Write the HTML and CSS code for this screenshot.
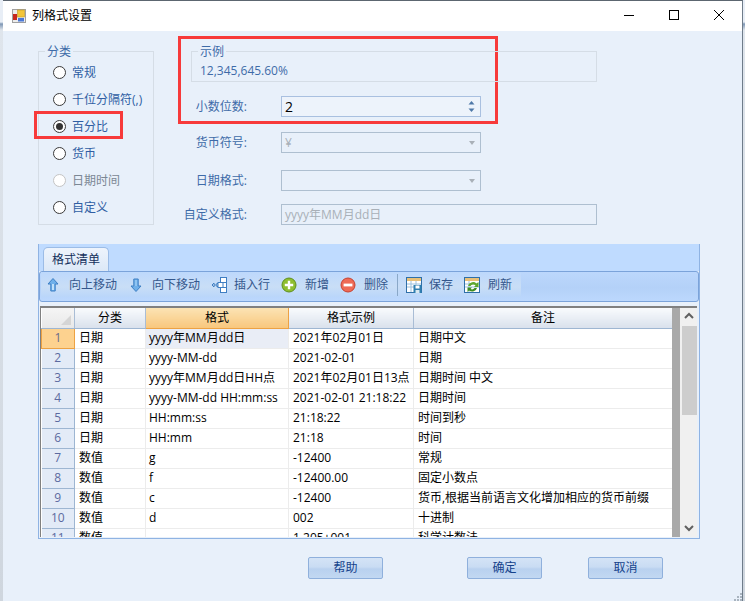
FILE: index.html
```html
<!DOCTYPE html>
<html lang="zh-CN">
<head>
<meta charset="utf-8">
<title>列格式设置</title>
<link rel="stylesheet" href="styles.css">
</head>
<body>
<div class="window">
  <header class="titlebar">
    <svg class="app-icon" width="14" height="14" viewBox="0 0 14 14"><rect x="0.5" y="0.5" width="13" height="13" fill="#ececec" stroke="#a0a0a0"/><rect x="1" y="5" width="4" height="6" fill="#c8281e"/><rect x="5.5" y="1" width="7" height="7" fill="#f3c53a" stroke="#c09a20" stroke-width="0.6"/><rect x="6" y="9" width="6" height="3.5" fill="#4a78d8"/></svg>
    <span class="title">列格式设置</span>
    <div class="caption-buttons">
      <svg width="12" height="12" viewBox="0 0 12 12"><path d="M1 6.5H11" stroke="#000" fill="none"/></svg>
      <svg width="12" height="12" viewBox="0 0 12 12"><rect x="1.5" y="1.5" width="9" height="9" stroke="#000" fill="none"/></svg>
      <svg width="12" height="12" viewBox="0 0 12 12"><path d="M1 1L11 11M11 1L1 11" stroke="#000" fill="none"/></svg>
    </div>
  </header>
  <main class="content">
    <section class="top">
      <div class="group category">
        <span class="legend">分类</span>
        <div class="radio"><span class="dot"></span>常规</div>
        <div class="radio"><span class="dot"></span>千位分隔符(,)</div>
        <div class="radio"><span class="dot on"></span>百分比</div>
        <div class="radio"><span class="dot"></span>货币</div>
        <div class="radio disabled"><span class="dot"></span>日期时间</div>
        <div class="radio"><span class="dot"></span>自定义</div>
        <span class="red-box red-radio"></span>
      </div>
      <div class="form">
        <span class="red-box red-form"></span>
        <div class="group sample">
          <span class="legend">示例</span>
          <span class="sample-value">12,345,645.60%</span>
        </div>
        <div class="field gap14">
          <label>小数位数:</label>
          <div class="input active"><span class="val">2</span>
            <svg class="spin" width="7" height="17" viewBox="0 0 7 17"><path d="M3.5 3L6.5 6.5H0.5Z" fill="#4f78a8"/><path d="M0.5 10.5H6.5L3.5 14Z" fill="#4f78a8"/></svg>
          </div>
        </div>
        <div class="field gap15">
          <label>货币符号:</label>
          <div class="input off"><span class="ph">¥</span><span class="caret"></span></div>
        </div>
        <div class="field gap17">
          <label>日期格式:</label>
          <div class="input off"><span class="ph"></span><span class="caret"></span></div>
        </div>
        <div class="field gap13">
          <label>自定义格式:</label>
          <div class="input off wide"><span class="ph">yyyy年MM月dd日</span></div>
        </div>
      </div>
    </section>

    <section class="panel">
      <div class="tabs"><div class="tab">格式清单</div></div>
      <div class="toolbar">
        <div class="strip">
          <div class="tool">
            <svg width="16" height="16" viewBox="0 0 16 16"><path d="M8 1.5L13 7H10.2V14H5.8V7H3Z" fill="#6fb0ea" stroke="#3d7fc4"/><path d="M7 7H9V13H7Z" fill="#bfe0fa"/></svg>向上移动
          </div>
          <div class="tool">
            <svg width="16" height="16" viewBox="0 0 16 16"><path d="M8 14.5L3 9H5.8V2H10.2V9H13Z" fill="#6fb0ea" stroke="#3d7fc4"/><path d="M7 3H9V9H7Z" fill="#8ec4f2"/></svg>向下移动
          </div>
          <div class="tool tight">
            <svg width="16" height="16" viewBox="0 0 16 16"><path d="M1 8L3 6V10ZM8 8L6 6V10ZM3 8H6" fill="#fff" stroke="#3f7ec2"/><rect x="9.5" y="0.5" width="6" height="15" fill="#fff" stroke="#3f7ec2"/><path d="M9.5 5.5H15.5M9.5 10.5H15.5" stroke="#3f7ec2"/><rect x="7" y="5.5" width="5" height="5" fill="#fff" stroke="#3f7ec2"/></svg>插入行
          </div>
          <div class="tool">
            <svg width="16" height="16" viewBox="0 0 16 16"><circle cx="8" cy="8" r="7" fill="#8fbe30" stroke="#5f8f1d"/><path d="M6.8 3.8H9.2V6.8H12.2V9.2H9.2V12.2H6.8V9.2H3.8V6.8H6.8Z" fill="#fff"/></svg>新增
          </div>
          <div class="tool">
            <svg width="16" height="16" viewBox="0 0 16 16"><circle cx="8" cy="8" r="7" fill="#ee6a55" stroke="#c8402e"/><rect x="3.6" y="6.6" width="8.8" height="2.8" fill="#fff"/></svg>删除
          </div>
          <span class="sep"></span>
          <div class="tool tight">
            <svg width="16" height="16" viewBox="0 0 16 16"><rect x="0.5" y="0.5" width="15" height="15" fill="#fff" stroke="#2f6fa8"/><rect x="1" y="1" width="14" height="3" fill="#e8c078"/><path d="M1 7H15M1 10H15M5 4V15M10 4V15" stroke="#9cc0dc"/><rect x="7.5" y="8" width="8" height="8" fill="#2f7fb0"/><rect x="9.5" y="8.5" width="4" height="3" fill="#fff"/><rect x="9.5" y="13" width="4" height="3" fill="#d8e8f0"/></svg>保存
          </div>
          <div class="tool">
            <svg width="16" height="16" viewBox="0 0 16 16"><rect x="0.5" y="0.5" width="15" height="15" fill="#fff" stroke="#2f6fa8"/><rect x="1" y="1" width="14" height="3" fill="#e8c078"/><path d="M1 7H15M1 10H15M5 4V15" stroke="#9cc0dc"/><path d="M4 9A5 4.5 0 0 1 12.5 6.5L14.5 5V10H10L11.5 8.5A3 2.6 0 0 0 6.5 9Z" fill="#5ea82e"/><path d="M13 11A5 4.5 0 0 1 5 13.5L3.5 15V10.5H8L6.5 12A3 2.6 0 0 0 10.5 11Z" fill="#3e8c22"/></svg>刷新
          </div>
        </div>
      </div>
      <div class="grid-wrap">
        <div class="grid-body">
          <table class="grid">
            <colgroup><col class="c0"><col class="c1"><col class="c2"><col class="c3"><col class="c4"></colgroup>
            <thead>
              <tr><th class="corner"><span class="tri"></span></th><th>分类</th><th class="sel">格式</th><th>格式示例</th><th>备注</th></tr>
            </thead>
            <tbody>
              <tr><td class="rh cur">1</td><td>日期</td><td class="selcell">yyyy年MM月dd日</td><td>2021年02月01日</td><td>日期中文</td></tr>
              <tr><td class="rh">2</td><td>日期</td><td>yyyy-MM-dd</td><td>2021-02-01</td><td>日期</td></tr>
              <tr><td class="rh">3</td><td>日期</td><td>yyyy年MM月dd日HH点</td><td>2021年02月01日13点</td><td>日期时间 中文</td></tr>
              <tr><td class="rh">4</td><td>日期</td><td>yyyy-MM-dd HH:mm:ss</td><td>2021-02-01 21:18:22</td><td>日期时间</td></tr>
              <tr><td class="rh">5</td><td>日期</td><td>HH:mm:ss</td><td>21:18:22</td><td>时间到秒</td></tr>
              <tr><td class="rh">6</td><td>日期</td><td>HH:mm</td><td>21:18</td><td>时间</td></tr>
              <tr><td class="rh">7</td><td>数值</td><td>g</td><td>-12400</td><td>常规</td></tr>
              <tr><td class="rh">8</td><td>数值</td><td>f</td><td>-12400.00</td><td>固定小数点</td></tr>
              <tr><td class="rh">9</td><td>数值</td><td>c</td><td>-12400</td><td>货币,根据当前语言文化增加相应的货币前缀</td></tr>
              <tr><td class="rh">10</td><td>数值</td><td>d</td><td>002</td><td>十进制</td></tr>
              <tr><td class="rh">11</td><td>数值</td><td></td><td>1.205+001</td><td>科学计数法</td></tr>
            </tbody>
          </table>
        </div>
        <div class="gutter"></div>
        <div class="scrollbar">
          <svg width="16" height="18" viewBox="0 0 16 18"><path d="M4 10L8 6L12 10" fill="none" stroke="#606060" stroke-width="2"/></svg>
          <div class="thumb"></div>
          <svg class="down" width="16" height="18" viewBox="0 0 16 18"><path d="M4 7L8 11L12 7" fill="none" stroke="#606060" stroke-width="2"/></svg>
        </div>
      </div>
    </section>

    <footer class="footer">
      <button class="btn help">帮助</button>
      <button class="btn ok">确定</button>
      <button class="btn cancel">取消</button>
      <svg class="grip" width="8" height="8" viewBox="0 0 8 8"><path d="M6 0h2v2H6zM3 3h2v2H3zM6 3h2v2H6zM0 6h2v2H0zM3 6h2v2H3zM6 6h2v2H6z" fill="#a9b4bf"/></svg>
    </footer>
  </main>
</div>
</body>
</html>
```

FILE: styles.css
```css
* { box-sizing: border-box; }
html, body { margin: 0; height: 100%; overflow: hidden; }
body {
  width: 745px;
  height: 601px;
  background: linear-gradient(180deg, #e8eef6 0, #e8eef6 22px, #7f97b5 24px, #dfe5ec 30px, #cfd6de 100%);
  font: 12px/16px "Open Sans", "Noto Sans CJK SC", sans-serif;
  color: #15428b;
}
.window {
  margin-left: 3px;
  width: 740px;
  height: 601px;
  border-top: 1px solid #5c6670;
  border-right: 1px solid #6f7c8a;
  background: #e8f0fa;
  display: flex;
  flex-direction: column;
}
.titlebar {
  height: 30px;
  background: #fff;
  display: flex;
  align-items: center;
  padding-left: 9px;
  color: #000;
}
.app-icon { flex: none; margin-top: -1px; }
.title { margin-left: 6px; font-size: 12px; margin-top: -1px; }
.caption-buttons {
  margin-left: auto;
  display: flex;
  gap: 33px;
  padding-right: 17px;
  margin-top: -2px;
}
.content { flex: 1; display: flex; flex-direction: column; }
.top { display: flex; padding: 20px 0 0 35px; height: 213px; }
.group { position: relative; border: 1px solid #d5dde6; }
.legend {
  position: absolute;
  left: 6px;
  top: -8px;
  padding: 0 2px;
  line-height: 16px;
  background: #e8f0fa;
  color: #3e6ba8;
}
.category { width: 116px; height: 174px; padding-top: 7px; flex: none; }
.radio {
  height: 27px;
  display: flex;
  align-items: center;
  padding-left: 14px;
  color: #2f5ea3;
}
.radio.disabled { color: #7b8794; }
.radio.disabled .dot { border-color: #c4c4c4; }
.dot {
  width: 13px;
  height: 13px;
  border-radius: 50%;
  border: 1.5px solid #3a3a3a;
  background: #fff;
  margin-right: 6px;
  flex: none;
  display: flex;
  align-items: center;
  justify-content: center;
}
.dot.on::after {
  content: "";
  width: 7px;
  height: 7px;
  border-radius: 50%;
  background: #333;
}
.red-box { position: absolute; border: 3px solid #f73a3a; pointer-events: none; }
.red-radio { left: -5px; top: 59px; width: 89px; height: 28px; }
.form { position: relative; margin-left: 37px; flex: none; }
.red-form { left: -13px; top: -15px; width: 320px; height: 88px; }
.sample { width: 406px; height: 31px; }
.sample-value { position: absolute; left: 8px; top: 11px; color: #3e6ba8; }
.field { display: flex; align-items: center; height: 21px; }
.gap14 { margin-top: 14px; }
.gap15 { margin-top: 15px; }
.gap17 { margin-top: 17px; }
.gap13 { margin-top: 13px; }
.field label {
  width: 56px;
  display: flex;
  justify-content: flex-end;
  white-space: nowrap;
  margin-right: 34px;
  color: #3e6ba8;
  flex: none;
}
.input {
  width: 200px;
  height: 21px;
  display: flex;
  align-items: center;
  justify-content: space-between;
  padding: 0 4px 0 3px;
  border: 1px solid #aebfd0;
}
.input.active { border-color: #a9c0e0; background: #edf3fb; }
.input.wide { width: 316px; }
.val { font-size: 14px; color: #000; }
.spin { margin-right: 1px; }
.ph { color: #a9b0b8; font-size: 12px; }
.caret {
  width: 0;
  height: 0;
  border: 3.5px solid transparent;
  border-top: 4px solid #a9b0b8;
  margin: 4px 1px 0 0;
}
.panel {
  margin: 0 0 0 35px;
  width: 662px;
  height: 295px;
  background: #e8f0fa;
  border: 1px solid #8fb3e3;
  border-top: 0;
  display: flex;
  flex-direction: column;
}
.tabs {
  height: 27px;
  background: #bfdbff;
  padding: 3px 0 0 4px;
  flex: none;
}
.tab {
  width: 66px;
  height: 24px;
  border: 1px solid #9cbce6;
  border-bottom: 0;
  border-radius: 5px 5px 0 0;
  background: linear-gradient(180deg, #eef4fc, #dce8f7);
  color: #15305c;
  text-align: center;
  line-height: 23px;
}
.toolbar {
  height: 31px;
  flex: none;
  border: 1px solid #7ba3da;
  border-radius: 3px;
  background: linear-gradient(180deg, #bcd7fc 0, #b4d1f8 55%, #bcd8fd 100%);
  padding: 0 0 4px 1px;
  display: flex;
}
.strip {
  display: flex;
  align-items: center;
  gap: 11px;
  width: 480px;
  padding-left: 4px;
  background: linear-gradient(180deg, #bdd8fc 0, #c9def6 60%, #bad6fa 100%);
  color: #34578c;
}
.tool { display: flex; align-items: center; gap: 8px; white-space: nowrap; }
.tool.tight { gap: 7px; }
.tool svg { flex: none; }
.sep { width: 1px; height: 22px; background: #8aa8c8; margin: 0 -3px 0 -2px; }
.grid-wrap {
  margin: 4px 2px 0 1px;
  height: 231px;
  background: #fff;
  border-top: 2px solid #808080;
  border-left: 1px solid #808080;
  display: flex;
  overflow: hidden;
}
.grid-body { width: 631px; height: 229px; overflow: hidden; flex: none; }
.grid { border-collapse: collapse; table-layout: fixed; width: 631px; color: #000; }
.c0 { width: 33px; }
.c1 { width: 71px; }
.c2 { width: 143px; }
.c3 { width: 125px; }
.c4 { width: 259px; }
.grid th {
  height: 20px;
  font-weight: 400;
  padding: 0;
  text-align: center;
  background: linear-gradient(180deg, #f9fbfd, #d9e1ec);
  border-right: 1px solid #a9bdd5;
  border-bottom: 1px solid #9eb6d2;
}
.grid th.sel {
  background: linear-gradient(180deg, #fbe3b4, #f8c77d);
  border-color: #eda243;
}
.grid th.corner { background: linear-gradient(180deg, #f5f5f5, #e8e8e8); position: relative; }
.tri {
  position: absolute;
  right: 3px;
  bottom: 3px;
  border-left: 10px solid transparent;
  border-bottom: 10px solid #d5d5d5;
}
.grid td {
  height: 20px;
  padding: 0 0 0 4px;
  border-right: 1px solid #ececec;
  border-bottom: 1px solid #ececec;
  white-space: nowrap;
  overflow: hidden;
}
.grid td:nth-child(3) { padding-left: 3px; }
.grid td.rh {
  padding: 0;
  text-align: center;
  background: #e3ebf7;
  color: #5c6aa0;
  border-right: 1px solid #9eb6d2;
  border-bottom: 1px solid #9eb6d2;
}
.grid td.rh.cur { background: #fdd28f; border: 1px solid #eda243; color: #6a6a8a; }
.grid td.selcell { background: #e9edf6; }
.gutter { width: 8px; flex: none; background: #a9a9a9; }
.scrollbar {
  width: 18px;
  flex: none;
  background: #f0f0f0;
  display: flex;
  flex-direction: column;
  align-items: center;
}
.scrollbar svg { flex: none; }
.thumb { width: 15px; height: 89px; background: #cdcdcd; }
.down { margin-top: auto; }
.footer { position: relative; flex: 1; display: flex; align-items: flex-start; padding: 18px 0 0 305px; }
.btn {
  width: 75px;
  height: 22px;
  padding: 0;
  border: 1px solid #8fb0dc;
  border-radius: 2px;
  background: linear-gradient(180deg, #d4e3f6 0, #c9dcf3 45%, #b9d1ef 55%, #c2d8f2 100%);
  font: inherit;
  line-height: 20px;
  color: #15428b;
}
.ok { margin-left: 84px; }
.cancel { margin-left: 46px; }
.grip { position: absolute; right: 0; bottom: 0; }
```
